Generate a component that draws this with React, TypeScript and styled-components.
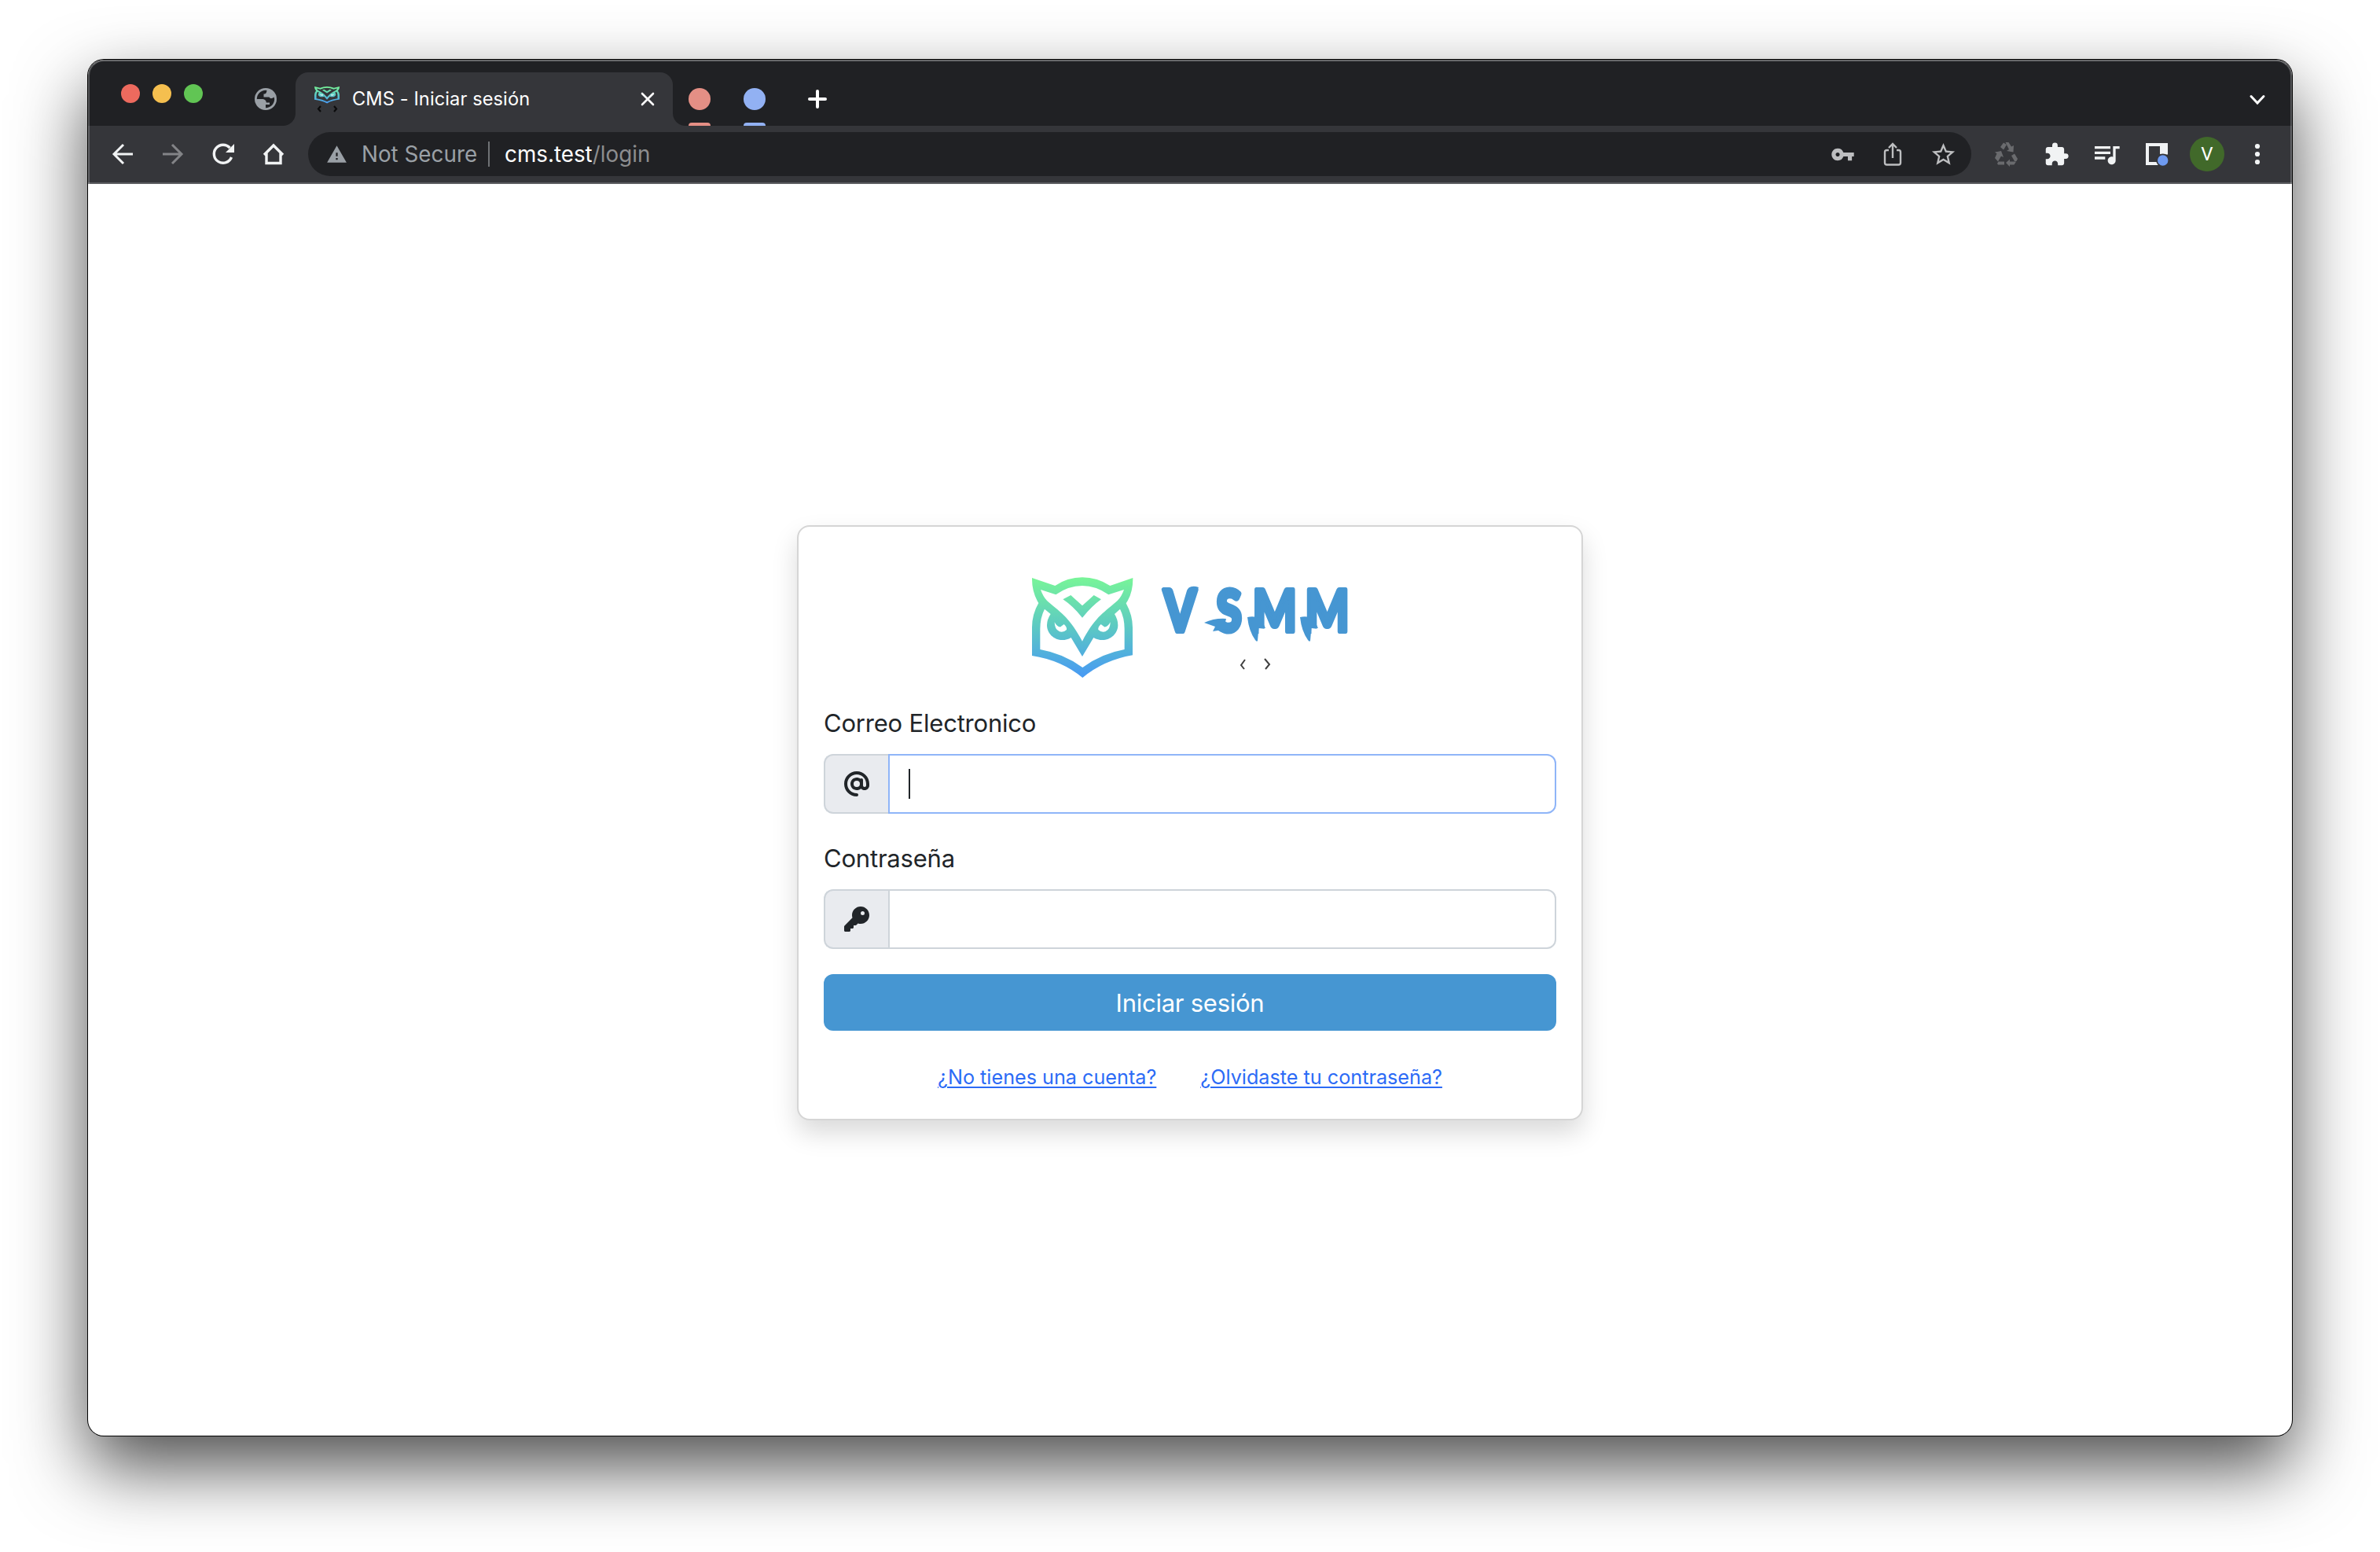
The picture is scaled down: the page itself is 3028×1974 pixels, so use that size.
import React from "react";
import styled, { createGlobalStyle, css } from "styled-components";
import { FaKey, FaAt } from "react-icons/fa6";
import { MdVpnKey, MdWarning, MdStarBorder, MdExtension, MdQueueMusic } from "react-icons/md";

const Global = createGlobalStyle`
  * { box-sizing: border-box; }
  html, body { margin: 0; background: #fff; }
  body { font-family: Inter, "Liberation Sans", sans-serif; overflow: hidden; }
`;

const Desktop = styled.div`
  width: 3028px;
  height: 1974px;
  padding: 76px 112px 148px;
  background: #fff;
  overflow: hidden;
`;

const Window = styled.div`
  position: relative;
  display: flex;
  flex-direction: column;
  width: 2804px;
  height: 1750px;
  border-radius: 20px;
  background: #fff;
  box-shadow: 0 0 0 1px #000, 0 40px 92px rgba(0, 0, 0, 0.7);
  &::before {
    content: "";
    position: absolute;
    z-index: 1;
    top: 0;
    left: 0;
    right: 0;
    height: 156px;
    border: 2px solid rgba(255, 255, 255, 0.24);
    border-top-color: rgba(255, 255, 255, 0.32);
    border-bottom: 0;
    border-radius: 20px 20px 0 0;
    pointer-events: none;
  }
`;

const TabStrip = styled.div`
  display: flex;
  align-items: flex-start;
  height: 84px;
  flex: none;
  padding: 0 32px 0 42px;
  background: #202124;
  border-radius: 20px 20px 0 0;
`;

const Lights = styled.div`
  display: flex;
  gap: 16px;
  padding-top: 31px;
`;

const Light = styled.i<{ $color: string }>`
  width: 24px;
  height: 24px;
  border-radius: 50%;
  background: ${(p) => p.$color};
`;

const PinnedTab = styled.div`
  display: flex;
  width: 34px;
  justify-content: center;
  margin: 36px 0 0 63px;
`;

const ActiveTab = styled.div`
  position: relative;
  display: flex;
  align-items: center;
  width: 480px;
  height: 68px;
  margin: 16px 0 0 21px;
  padding: 0 23px 0 23px;
  border-radius: 16px 16px 0 0;
  background: #35363a;
  color: #fff;
  &::before,
  &::after {
    content: "";
    position: absolute;
    bottom: 0;
    width: 16px;
    height: 16px;
  }
  &::before {
    left: -16px;
    background: radial-gradient(circle at 0 0, #202124 15.5px, #35363a 16.5px);
  }
  &::after {
    right: -16px;
    background: radial-gradient(circle at 100% 0, #202124 15.5px, #35363a 16.5px);
  }
`;

const TabTitle = styled.span`
  flex: 1;
  margin-left: 15px;
  font-size: 23.6px;
  letter-spacing: 0.1px;
  line-height: 32px;
  white-space: nowrap;
`;

const GroupTab = styled.div<{ $color: string; $gap: number }>`
  display: flex;
  flex-direction: column;
  justify-content: space-between;
  width: 28px;
  height: 48px;
  margin: 36px 0 0 ${(p) => p.$gap}px;
  &::before {
    content: "";
    height: 28px;
    border-radius: 50%;
    background: ${(p) => p.$color};
  }
  &::after {
    content: "";
    height: 4px;
    border-radius: 4px 4px 0 0;
    background: ${(p) => p.$color};
  }
`;

const Plus = styled.div`
  display: flex;
  margin: 38px 0 0 54px;
`;

const Chevron = styled.div`
  display: flex;
  margin: 44px 0 0 auto;
`;

const Toolbar = styled.div`
  display: flex;
  align-items: center;
  height: 74px;
  flex: none;
  padding: 0 28px;
  background: #35363a;
  border-bottom: 2px solid #5d5e61;
`;

const NavButtons = styled.div`
  display: flex;
  gap: 32px;
`;

const IconSlot = styled.span<{ $dim?: boolean }>`
  display: flex;
  align-items: center;
  justify-content: center;
  width: 32px;
  height: 32px;
  color: #f1f3f4;
  svg {
    flex: none;
  }
  ${(p) =>
    p.$dim &&
    css`
      color: #838487;
    `}
`;

const AddressBar = styled.div`
  display: flex;
  align-items: center;
  flex: none;
  width: 2116px;
  height: 56px;
  margin-left: 28px;
  padding: 0 20px 0 23px;
  border-radius: 28px;
  background: #202124;
  font-size: 27.8px;
  line-height: 36px;
  white-space: nowrap;
  color: #9aa0a6;
`;

const Secure = styled.span`
  margin-left: 18px;
  width: 147px;
`;

const Divider = styled.i`
  width: 2px;
  height: 32px;
  margin: 0 19px 0 14px;
  background: #6f7275;
`;

const Url = styled.span`
  flex: 1;
  color: #8c8d8f;
  b {
    font-weight: 400;
    color: #fff;
  }
`;

const BarIcons = styled.div`
  display: flex;
  gap: 32px;
  ${IconSlot} {
    color: #bdbec0;
  }
`;

const Extensions = styled.div`
  display: flex;
  align-items: center;
  gap: 32px;
  margin-left: 28px;
`;

const Avatar = styled.div`
  display: flex;
  align-items: center;
  justify-content: center;
  width: 44px;
  height: 44px;
  margin: 0 -6px;
  border-radius: 50%;
  background: #41692a;
  color: #fff;
  font: 24px/44px Roboto, sans-serif;
`;

const Page = styled.main`
  display: flex;
  flex: 1;
  justify-content: center;
  align-items: flex-start;
  padding-top: 434px;
  border-radius: 0 0 20px 20px;
`;

const Card = styled.form`
  display: flex;
  flex-direction: column;
  width: 1000px;
  height: 757px;
  padding: 62px 32px 0;
  border: 2px solid #d5d5d5;
  border-radius: 16px;
  background: #fff;
  box-shadow: 0 16px 32px rgba(0, 0, 0, 0.15);
`;

const Brand = styled.div`
  display: flex;
  justify-content: center;
  height: 132px;
`;

const Label = styled.label<{ $top: number }>`
  margin-top: ${(p) => p.$top}px;
  font-size: 31px;
  line-height: 48px;
  letter-spacing: -0.2px;
  color: #212529;
`;

const Field = styled.div`
  display: flex;
  height: 76px;
  margin-top: 15px;
`;

const Prefix = styled.span`
  display: flex;
  align-items: center;
  justify-content: center;
  width: 82px;
  border: 2px solid #ced4da;
  border-right: 0;
  border-radius: 12px 0 0 12px;
  background: #e9ebef;
  color: #212529;
`;

const Input = styled.div<{ $focus?: boolean }>`
  display: flex;
  align-items: center;
  flex: 1;
  padding-left: 24px;
  border: 2px solid ${(p) => (p.$focus ? "#8fb5f8" : "#ced4da")};
  border-radius: 0 12px 12px 0;
`;

const Caret = styled.i`
  width: 2px;
  height: 38px;
  background: #212529;
`;

const Submit = styled.button`
  height: 72px;
  margin-top: 32px;
  padding: 1px 0 0;
  border: 0;
  border-radius: 12px;
  background: #4696d2;
  color: #fff;
  font: 31px/48px Inter, "Liberation Sans", sans-serif;
  letter-spacing: -0.25px;
`;

const Links = styled.div`
  display: flex;
  justify-content: center;
  gap: 56px;
  margin-top: 38px;
`;

const Link = styled.a`
  font-size: 25.2px;
  line-height: 42px;
  color: #2c6bf6;
  text-decoration: underline;
  text-decoration-thickness: 2px;
  text-underline-offset: 3px;
  white-space: nowrap;
`;

function OwlShapes({ id }: { id: string }) {
  return (
    <>
      <defs>
        <linearGradient id={id} gradientUnits="userSpaceOnUse" x1="0" y1="0" x2="0" y2="384">
          <stop offset="0" stopColor="#78f598" />
          <stop offset="0.5" stopColor="#5cc8c4" />
          <stop offset="0.97" stopColor="#489bf2" />
        </linearGradient>
      </defs>
      <g fill={`url(#${id})`} fillRule="evenodd">
        <path d="M0 1 L88 31 Q136 -1 192 -1 Q248 -1 298 31 L385 1 Q386 58 359 98 Q384 144 384 190 V296 Q274 315 193 382 Q112 315 0 298 V190 Q0 140 25 97 Q-1 55 0 1Z M33 46 Q44 78 63 93 C112 134 147 157 192 243 C235 157 272 134 320 93 Q340 78 351 46 L292 65 Q244 31 192 31 Q139 31 91 65Z M48 120 Q31 153 31 196 V274 Q121 290 193 343 Q264 290 353 274 V196 Q353 153 336 120 L315 139 Q328 160 328 181 C328 225 278 254 235 229 L192 301 L149 229 C107 254 57 225 57 181 Q57 160 71 139Z" />
        <path d="M118 83 L148 67 L192 107 L236 67 L264 83 Q229 108 192 153 Q156 108 118 83Z" />
      </g>
      <g fill="#fff">
        <path d="M86 170 Q96 189 109 188 L122 178 Q134 188 132 199 Q121 210 105 206 Q86 198 86 170Z" />
        <path d="M299 170 Q289 189 276 188 L263 178 Q251 188 253 199 Q264 210 280 206 Q299 198 299 170Z" />
      </g>
    </>
  );
}

function BrandLogo() {
  return (
    <svg width="416" height="132" viewBox="1306 732 416 132">
      <g transform="translate(1313 734.7) scale(.3333)">
        <OwlShapes id="owlMain" />
      </g>
      <text
        transform="translate(1480 803) scale(.8 1)"
        x="1 84.5 142.5 226"
        y="0"
        fontFamily="Lato"
        fontWeight="900"
        fontSize="73"
        fill="#4696d2"
        stroke="#4696d2"
        strokeWidth="6"
        strokeLinejoin="round"
      >
        VSMM
      </text>
      <g fill="#fff">
        <path d="M1601.500 799 L1611 800 V808 H1601.500Z" />
        <path d="M1668.500 799 L1678 800 V808 H1668.500Z" />
      </g>
      <g fill="#4696d2">
        <path d="M1532 792 Q1545 786 1560 787 L1558 795 L1562 800 L1543 803 L1546 797Z" />
        <path d="M1587 785 Q1594 783 1604 786 L1610 799 L1601.500 798 L1600 815 Q1599 817 1597 814 Q1589 803 1587 785Z" />
        <path d="M1654 785 Q1661 783 1671 786 L1677 799 L1668.500 798 L1667 815 Q1666 817 1664 814 Q1656 803 1654 785Z" />
        <path d="M1512 748 Q1517 744 1525 747 L1518 759 L1510.500 758Z" />
      </g>
      <g fill="none" stroke="#3f3f3f" strokeWidth="2">
        <path d="M1584 839 L1579 846 L1583 851" />
        <path d="M1609 838 L1615 845 L1610 851" />
      </g>
    </svg>
  );
}

function Favicon() {
  return (
    <svg width="34" height="34" viewBox="0 0 34 34">
      <g transform="translate(1 1) scale(.0834 .056)">
        <OwlShapes id="owlTab" />
      </g>
      <path d="M9 26 L6 29.500 L9 33 M26 26 L29 29.500 L26 33" fill="none" stroke="#0b0b0c" strokeWidth="2.200" />
    </svg>
  );
}

function Globe() {
  return (
    <svg width="28" height="28" viewBox="0 0 28 28">
      <circle cx="14" cy="14" r="14" fill="#9aa0a6" />
      <path
        d="M14 2.800 C7.800 2.800 2.800 7.800 2.800 14 H9 C12 14 14.500 15 14.800 18.500 H19 V21 H14 V25.200 C20.200 25.200 25.200 20.200 25.200 14 L24.600 11.500 C22 13.500 20 14 18.500 11.500 H11.500 V7.500 C14.500 7.500 15 6 15.500 2.900Z"
        fill="#202124"
      />
      <path d="M3 14.500 H9.500 C12 14.500 14 16 14 18.300 H10 V24.500 C6 23 3 19 3 14.500Z" fill="#9aa0a6" />
    </svg>
  );
}

function Arrow({ flip }: { flip?: boolean }) {
  return (
    <svg width="32" height="32" viewBox="0 0 32 32">
      <path
        transform={flip ? "translate(32 0) scale(-1 1)" : undefined}
        d="M29 16 H5 M17 4 L5 16 L17 28"
        fill="none"
        stroke="currentColor"
        strokeWidth="3"
      />
    </svg>
  );
}

function Recycle() {
  return (
    <svg width="30" height="32" viewBox="0 0 30 32">
      <g fill="#6a6b6e">
        <path d="M8 7 L12 1.500 L16 4 L12 10.500Z" />
        <path d="M14.500 1 H18.500 L22 6.500 L25 5 L24.500 13.500 L16 12 L19 10 Z" />
        <path d="M1 13.500 L9 12 L12 20 L9 18.500 L5 25.500 L1 21 L3.500 15.500Z" />
        <path d="M5.500 25.500 H13 V29.500 H5 L4 28Z" />
        <path d="M15 27 L20 22.500 V25.500 H28 L25.500 29.500 H20 V32Z" />
        <path d="M22 18 L26 15.500 L30 22 L28.500 25 H26Z" />
      </g>
    </svg>
  );
}

export default function App() {
  return (
    <Desktop>
      <Global />
      <Window>
        <TabStrip>
          <Lights>
            <Light $color="#ed6a5e" />
            <Light $color="#f5bf4f" />
            <Light $color="#61c554" />
          </Lights>
          <PinnedTab>
            <Globe />
          </PinnedTab>
          <ActiveTab>
            <Favicon />
            <TabTitle>CMS - Iniciar sesión</TabTitle>
            <svg width="18" height="18" viewBox="0 0 18 18">
              <path d="M2 2 L16 16 M16 2 L2 16" stroke="#fff" strokeWidth="2.600" strokeLinecap="round" />
            </svg>
          </ActiveTab>
          <GroupTab $color="#e48f85" $gap={20} />
          <GroupTab $color="#92b1f3" $gap={42} />
          <Plus>
            <svg width="24" height="24" viewBox="0 0 24 24">
              <path d="M12 2 V22 M2 12 H22" stroke="#fff" strokeWidth="4" strokeLinecap="round" />
            </svg>
          </Plus>
          <Chevron>
            <svg width="24" height="16" viewBox="0 0 24 16">
              <path d="M4 2.500 L12 11 L20 2.500" fill="none" stroke="#fff" strokeWidth="3" strokeLinecap="round" />
            </svg>
          </Chevron>
        </TabStrip>
        <Toolbar>
          <NavButtons>
            <IconSlot><Arrow /></IconSlot>
            <IconSlot $dim><Arrow flip /></IconSlot>
            <IconSlot>
              <svg width="32" height="32" viewBox="0 0 32 32">
                <path d="M26.500 20 A11.500 11.500 0 1 1 24.500 8.200" fill="none" stroke="currentColor" strokeWidth="3.400" />
                <path d="M30 3 V14 H19Z" fill="currentColor" />
              </svg>
            </IconSlot>
            <IconSlot>
              <svg width="32" height="32" viewBox="0 0 32 32">
                <path d="M4 17 L16 5 L28 17 M7 15 V27.500 H25 V15" fill="none" stroke="currentColor" strokeWidth="3.400" />
              </svg>
            </IconSlot>
          </NavButtons>
          <AddressBar>
            <MdWarning size={27} />
            <Secure>Not Secure</Secure>
            <Divider />
            <Url><b>cms.test</b>/login</Url>
            <BarIcons>
              <IconSlot><MdVpnKey size={31} /></IconSlot>
              <IconSlot>
                <svg width="32" height="32" viewBox="0 0 32 32" fill="none" stroke="currentColor" strokeWidth="2.400">
                  <path d="M11 11 H8.500 Q6 11 6 13.500 V27 Q6 29.500 8.500 29.500 H23.500 Q26 29.500 26 27 V13.500 Q26 11 23.500 11 H21 M16 21 V3 M11 8 L16 3 L21 8" />
                </svg>
              </IconSlot>
              <IconSlot><MdStarBorder size={35} /></IconSlot>
            </BarIcons>
          </AddressBar>
          <Extensions>
            <IconSlot><Recycle /></IconSlot>
            <IconSlot><MdExtension size={33} /></IconSlot>
            <IconSlot><MdQueueMusic size={40} /></IconSlot>
            <IconSlot>
              <svg width="32" height="32" viewBox="0 0 32 32">
                <path d="M2 2 H30 V16.500 H20 V6 H6 V26 H18 V30 H2Z" fill="#f1f3f4" />
                <circle cx="23.700" cy="24" r="7.600" fill="#6e9af0" stroke="#35363a" strokeWidth="1.800" />
              </svg>
            </IconSlot>
            <Avatar>V</Avatar>
            <IconSlot>
              <svg width="32" height="32" viewBox="0 0 32 32" fill="#f1f3f4">
                <circle cx="16" cy="6" r="3.100" />
                <circle cx="16" cy="16" r="3.100" />
                <circle cx="16" cy="26" r="3.100" />
              </svg>
            </IconSlot>
          </Extensions>
        </Toolbar>
        <Page>
          <Card>
            <Brand><BrandLogo /></Brand>
            <Label $top={32}>Correo Electronico</Label>
            <Field>
              <Prefix><FaAt size={32} /></Prefix>
              <Input $focus><Caret /></Input>
            </Field>
            <Label $top={33}>Contraseña</Label>
            <Field>
              <Prefix><FaKey size={32} /></Prefix>
              <Input />
            </Field>
            <Submit type="button">Iniciar sesión</Submit>
            <Links>
              <Link>¿No tienes una cuenta?</Link>
              <Link>¿Olvidaste tu contraseña?</Link>
            </Links>
          </Card>
        </Page>
      </Window>
    </Desktop>
  );
}
